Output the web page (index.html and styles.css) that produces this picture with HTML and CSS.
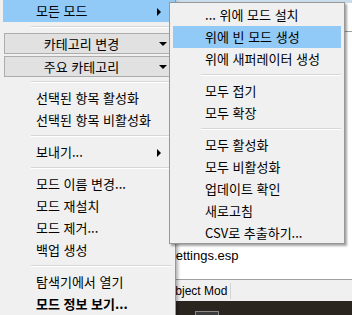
FILE: index.html
```html
<!DOCTYPE html>
<html lang="ko">
<head>
    <meta charset="UTF-8">
    <meta name="viewport" content="width=device-width, initial-scale=1.0">
    <title>Mod Context Menu</title>
    <link rel="stylesheet" href="styles.css">
</head>
<body>

    <!-- Window behind the menus -->
    <div class="app">
        <div class="list">
            <div class="list-top"></div>
            <div class="list-line"></div>
            <div class="list-fill"></div>
            <div class="list-row">Settings.esp</div>
        </div>
        <div class="list-header">
            <span class="col">Object Mod</span>
        </div>
        <div class="dark-panel">
            <div class="dark-button"></div>
        </div>
    </div>

    <!-- Main context menu -->
    <div class="menu main-menu">
        <div class="item active has-sub">모든 모드</div>
        <div class="sep"></div>
        <div class="combos">
            <div class="combo">카테고리 변경</div>
            <div class="combo">주요 카테고리</div>
        </div>
        <div class="sep"></div>
        <div class="item">선택된 항목 활성화</div>
        <div class="item">선택된 항목 비활성화</div>
        <div class="sep"></div>
        <div class="item has-sub">보내기...</div>
        <div class="sep"></div>
        <div class="item">모드 이름 변경...</div>
        <div class="item">모드 재설치</div>
        <div class="item">모드 제거...</div>
        <div class="item">백업 생성</div>
        <div class="sep"></div>
        <div class="item">탐색기에서 열기</div>
        <div class="item bold">모드 정보 보기...</div>
    </div>

    <!-- Sub menu for "모든 모드" -->
    <div class="menu sub-menu">
        <div class="item">... 위에 모드 설치</div>
        <div class="item active">위에 빈 모드 생성</div>
        <div class="item">위에 새퍼레이터 생성</div>
        <div class="sep"></div>
        <div class="item">모두 접기</div>
        <div class="item">모두 확장</div>
        <div class="sep"></div>
        <div class="item">모두 활성화</div>
        <div class="item">모두 비활성화</div>
        <div class="item">업데이트 확인</div>
        <div class="item">새로고침</div>
        <div class="item">CSV로 추출하기...</div>
    </div>

</body>
</html>
```

FILE: styles.css
```css
body {
    margin: 0;
    width: 352px;
    height: 315px;
    overflow: hidden;
    position: relative;
    background-color: #fff;
    font-family: "Noto Sans CJK KR", "Liberation Sans", sans-serif;
    font-size: 13px;
    color: #000;
}

/* Background window */
.app {
    display: flex;
    flex-direction: column;
    height: 315px;
}
.list {
    flex: 1;
    display: flex;
    flex-direction: column;
    background-color: #fff;
}
.list-top {
    height: 3px;
    background-color: #c9dcec;
}
.list-line {
    height: 1px;
    margin-top: 28px;
    background-color: #a0a0a0;
}
.list-fill {
    flex: 1;
}
.list-row {
    height: 19px;
    line-height: 19px;
    padding-left: 167px;
    margin-bottom: 14px;
    font-family: "Liberation Sans", sans-serif;
    font-size: 13px;
}
.list-header {
    height: 21px;
    border-top: 1px solid #a0a0a0;
    background-color: #f0f0f0;
    display: flex;
    align-items: center;
    padding-left: 166px;
    font-family: "Liberation Sans", sans-serif;
    font-size: 12px;
}
.list-header .col {
    padding-right: 3px;
    border-right: 1px solid #d5d5d5;
    line-height: 16px;
}
.dark-panel {
    height: 4px;
    background-color: #2b2520;
    padding: 10px 0 0 195px;
}
.dark-button {
    width: 22px;
    height: 4px;
    border: 1px solid #8a8a8a;
    border-bottom: none;
    background-color: #3c3c3c;
}

/* Menus */
.menu {
    position: absolute;
    background-color: #f0f0f0;
}
.main-menu {
    left: 0;
    top: 0;
    width: 175px;
    height: 330px;
    border-right: 1px solid #979797;
    box-shadow: 2px 2px 3px rgba(0, 0, 0, 0.3);
}
.sub-menu {
    left: 169px;
    top: 2px;
    width: 174px;
    padding: 1px 0 0;
    height: 239px;
    border: 1px solid #979797;
    box-shadow: 2px 2px 2px rgba(0, 0, 0, 0.35);
}
.item {
    position: relative;
    height: 22px;
    line-height: 22px;
    margin: 0 3px 0 3px;
    padding-left: 32px;
    white-space: nowrap;
}
.item.active {
    background-color: #91c9f7;
}
.item.bold {
    font-weight: bold;
}
.main-menu .item {
    margin-left: 3px;
    margin-right: 0;
    padding-left: 33px;
}
.has-sub::after {
    content: "";
    position: absolute;
    left: 154px;
    top: 8px;
    border-left: 4px solid #000;
    border-top: 4px solid transparent;
    border-bottom: 4px solid transparent;
}
.sep {
    height: 1px;
    margin: 4px 3px 4px 31px;
    background-color: #d7d7d7;
    border-bottom: 1px solid #fff;
}
.main-menu .sep {
    margin-right: 3px;
}

/* Combo boxes inside the menu */
.combos {
    display: flex;
    flex-direction: column;
    gap: 2px;
    padding: 1px 0 0 4px;
}
.combo {
    position: relative;
    height: 19px;
    line-height: 19px;
    border: 1px solid #adadad;
    background-color: #e1e1e1;
    padding-right: 16px;
    text-align: center;
}
.combo::after {
    content: "";
    position: absolute;
    left: 154px;
    top: 8px;
    border-top: 4px solid #000;
    border-left: 4px solid transparent;
    border-right: 4px solid transparent;
}
```
